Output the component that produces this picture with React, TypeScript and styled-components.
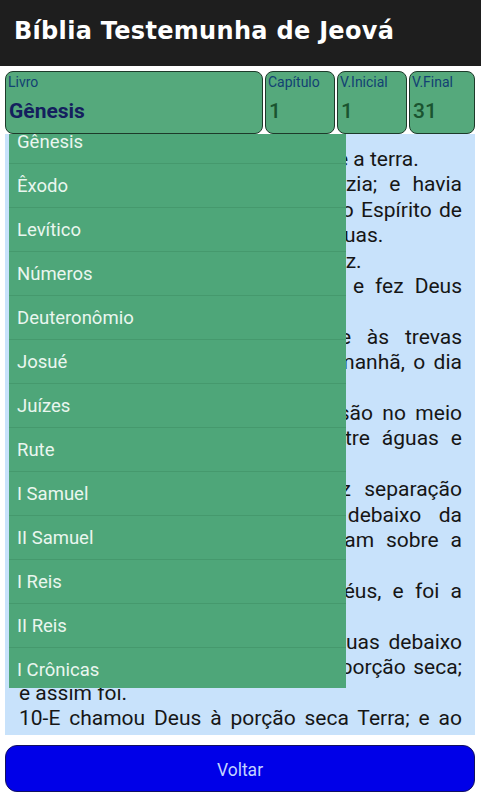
import React from 'react';
import styled, { createGlobalStyle } from 'styled-components';

const GlobalStyle = createGlobalStyle`
  html, body {
    margin: 0;
    padding: 0;
    background: #ffffff;
  }
  * {
    box-sizing: border-box;
  }
`;

const Page = styled.div`
  width: 481px;
  height: 800px;
  display: flex;
  flex-direction: column;
  background: #ffffff;
  font-family: Roboto, "Liberation Sans", sans-serif;
  overflow: hidden;
`;

const Header = styled.header`
  height: 66px;
  flex-shrink: 0;
  background: #1e1e1e;
  display: flex;
  align-items: center;
  padding: 0 0 4px 14px;
`;

const Title = styled.h1`
  margin: 0;
  color: #ffffff;
  font-family: "DejaVu Sans", sans-serif;
  font-weight: bold;
  font-size: 24px;
  letter-spacing: 0.3px;
`;

const Main = styled.main`
  position: relative;
  height: 669px;
  flex-shrink: 0;
  display: flex;
  flex-direction: column;
  padding: 5px 6px 0 5px;
`;

const FieldRow = styled.div`
  position: relative;
  z-index: 2;
  height: 63px;
  display: flex;
  gap: 2px;
  flex-shrink: 0;
`;

const Field = styled.div<{ $w: number }>`
  width: ${(p) => p.$w}px;
  background: #55a97c;
  border: 1.5px solid #1d3a2a;
  border-radius: 8px;
  display: flex;
  flex-direction: column;
  padding: 1px 2px 0 2px;
`;

const FieldLabel = styled.span`
  font-size: 14px;
  line-height: 18px;
  color: #124173;
`;

const FieldValue = styled.span<{ $book?: boolean }>`
  margin-top: 7px;
  font-size: 21px;
  line-height: 26px;
  font-weight: ${(p) => (p.$book ? 700 : 500)};
  color: ${(p) => (p.$book ? '#14205e' : '#1a5430')};
  padding-left: 1px;
`;

const TextPanel = styled.section`
  height: 601px;
  flex-shrink: 0;
  overflow: hidden;
  background: #c8e2fb;
  padding: 13px 13px 0 14px;
  color: #161616;
  font-size: 21px;
  line-height: 25.4px;
`;

const Line = styled.div<{ $last?: boolean }>`
  white-space: nowrap;
  text-align: ${(p) => (p.$last ? 'left' : 'justify')};
  text-align-last: ${(p) => (p.$last ? 'left' : 'justify')};
`;

const Dropdown = styled.div`
  position: absolute;
  z-index: 1;
  left: 9px;
  top: 68px;
  width: 337px;
  height: 554px;
  overflow: hidden;
  background: #4ea679;
`;

const DropdownList = styled.ul`
  list-style: none;
  margin: -14px 0 0 0;
  padding: 0;
`;

const DropdownItem = styled.li`
  height: 44px;
  display: flex;
  align-items: center;
  padding-left: 8px;
  border-bottom: 1px solid #45996d;
  color: #eaf6ef;
  font-size: 18.5px;
`;

const Footer = styled.div`
  flex-shrink: 0;
  padding: 10px 6px 8px 5px;
`;

const BackButton = styled.button`
  width: 100%;
  height: 47px;
  border: 1.5px solid #121260;
  border-radius: 12px;
  background: #0000e8;
  color: #c3d3ff;
  font-family: Roboto, "Liberation Sans", sans-serif;
  font-size: 17.5px;
  padding-top: 4px;
  cursor: pointer;
`;

const verses: { text: string; last?: boolean }[] = [
  { text: '1-No princípio criou Deus os céus e a terra.', last: true },
  { text: '2-E a terra era sem forma e vazia; e havia' },
  { text: 'trevas sobre a face do abismo; e o Espírito de' },
  { text: 'Deus se movia sobre a face das águas.', last: true },
  { text: '3-E disse Deus: Haja luz; e houve luz.', last: true },
  { text: '4-E viu Deus que era boa a luz; e fez Deus' },
  { text: 'separação entre a luz e as trevas.', last: true },
  { text: '5-E Deus chamou à luz Dia; e às trevas' },
  { text: 'chamou Noite. E foi a tarde e a manhã, o dia' },
  { text: 'primeiro.', last: true },
  { text: '6-E disse Deus: Haja uma expansão no meio' },
  { text: 'das águas, e haja separação entre águas e' },
  { text: 'águas.', last: true },
  { text: '7-E fez Deus a expansão, e fez separação' },
  { text: 'entre as águas que estavam debaixo da' },
  { text: 'expansão e as águas que estavam sobre a' },
  { text: 'expansão; e assim foi.', last: true },
  { text: '8-E chamou Deus à expansão Céus, e foi a' },
  { text: 'tarde e a manhã, o dia segundo.', last: true },
  { text: '9-E disse Deus: Ajuntem-se as águas debaixo' },
  { text: 'dos céus num lugar; e apareça a porção seca;' },
  { text: 'e assim foi.', last: true },
  { text: '10-E chamou Deus à porção seca Terra; e ao' },
  { text: 'ajuntamento das águas chamou Mares; e viu' },
  { text: 'Deus que era bom.', last: true },
];

const books = [
  'Gênesis',
  'Êxodo',
  'Levítico',
  'Números',
  'Deuteronômio',
  'Josué',
  'Juízes',
  'Rute',
  'I Samuel',
  'II Samuel',
  'I Reis',
  'II Reis',
  'I Crônicas',
  'II Crônicas',
];

const App: React.FC = () => {
  return (
    <Page>
      <GlobalStyle />
      <Header>
        <Title>Bíblia Testemunha de Jeová</Title>
      </Header>
      <Main>
        <FieldRow>
          <Field $w={258}>
            <FieldLabel>Livro</FieldLabel>
            <FieldValue $book>Gênesis</FieldValue>
          </Field>
          <Field $w={70}>
            <FieldLabel>Capítulo</FieldLabel>
            <FieldValue>1</FieldValue>
          </Field>
          <Field $w={70}>
            <FieldLabel>V.Inicial</FieldLabel>
            <FieldValue>1</FieldValue>
          </Field>
          <Field $w={66}>
            <FieldLabel>V.Final</FieldLabel>
            <FieldValue>31</FieldValue>
          </Field>
        </FieldRow>
        <TextPanel>
          {verses.map((v, i) => (
            <Line key={i} $last={v.last}>
              {v.text}
            </Line>
          ))}
        </TextPanel>
        <Dropdown>
          <DropdownList>
            {books.map((b) => (
              <DropdownItem key={b}>{b}</DropdownItem>
            ))}
          </DropdownList>
        </Dropdown>
      </Main>
      <Footer>
        <BackButton>Voltar</BackButton>
      </Footer>
    </Page>
  );
};

export default App;
